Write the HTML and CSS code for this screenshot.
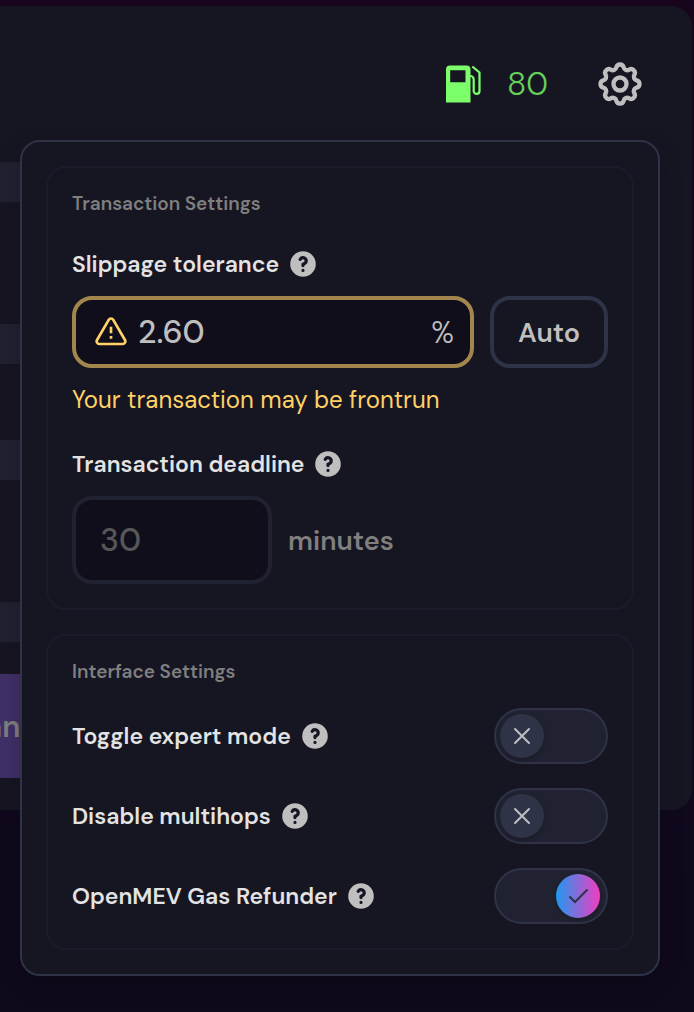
FILE: index.html
```html
<!DOCTYPE html>
<html lang="en">
<head>
  <meta charset="UTF-8">
  <meta name="viewport" content="width=device-width, initial-scale=1.0">
  <title>Swap Settings</title>
  <link rel="stylesheet" href="styles.css">
</head>
<body>
  <!-- Icons used more than once -->
  <svg class="sprite" aria-hidden="true">
    <symbol id="icon-help" viewBox="0 0 20 20">
      <path fill="currentColor" fill-rule="evenodd" clip-rule="evenodd" d="M18 10a8 8 0 11-16 0 8 8 0 0116 0zm-8-3a1 1 0 00-.867.5 1 1 0 11-1.731-1A3 3 0 0113 8a3.001 3.001 0 01-2 2.83V11a1 1 0 11-2 0v-1a1 1 0 011-1 1 1 0 100-2zm0 8a1 1 0 100-2 1 1 0 000 2z"/>
    </symbol>
    <symbol id="icon-x" viewBox="0 0 24 24">
      <path fill="none" stroke="currentColor" stroke-width="2" stroke-linecap="round" d="M5 5l14 14M19 5L5 19"/>
    </symbol>
    <symbol id="icon-check" viewBox="0 0 24 24">
      <path fill="none" stroke="currentColor" stroke-width="2" stroke-linecap="round" stroke-linejoin="miter" d="M4 13l5 5L21 6"/>
    </symbol>
  </svg>

  <main class="swap-card">
    <header class="swap-header">
      <div class="gas">
        <svg class="gas-icon" viewBox="0 0 36 38" aria-hidden="true">
          <path fill="currentColor" fill-rule="evenodd" d="M4 0.500h16.500a4 4 0 014 4V37.500H0V4.500a4 4 0 014-4zM4.200 5.200v12h15.300v-12z"/>
          <path fill="none" stroke="currentColor" stroke-width="2.200" d="M26.300 1.500l7.200 6V26a2.900 2.900 0 01-5.800 0V14.500a3.500 3.500 0 00-3.500-3.500"/>
        </svg>
        <span class="gas-price">80</span>
      </div>
      <button class="settings-button" type="button" aria-label="Settings">
        <svg viewBox="0 0 24 24" fill="none" stroke="currentColor" stroke-width="2" stroke-linecap="round" stroke-linejoin="round">
          <path d="M10.325 4.317c.426-1.756 2.924-1.756 3.350 0a1.724 1.724 0 002.573 1.066c1.543-.94 3.310.826 2.370 2.370a1.724 1.724 0 001.065 2.572c1.756.426 1.756 2.924 0 3.350a1.724 1.724 0 00-1.066 2.573c.94 1.543-.826 3.310-2.370 2.370a1.724 1.724 0 00-2.572 1.065c-.426 1.756-2.924 1.756-3.350 0a1.724 1.724 0 00-2.573-1.066c-1.543.94-3.310-.826-2.370-2.370a1.724 1.724 0 00-1.065-2.572c-1.756-.426-1.756-2.924 0-3.350a1.724 1.724 0 001.066-2.573c-.94-1.543.826-3.310 2.370-2.370.996.608 2.296.070 2.572-1.065z"/>
          <circle cx="12" cy="12" r="3"/>
        </svg>
      </button>
    </header>

    <div class="swap-form">
      <div class="asset">
        <div class="asset-row"></div>
        <div class="asset-row"></div>
      </div>
      <div class="asset">
        <div class="asset-row"></div>
        <div class="asset-row"></div>
      </div>
      <button class="swap-button" type="button">an</button>
    </div>

    <div class="settings-panel">
      <section class="settings-group">
        <h2 class="group-title">Transaction Settings</h2>

        <div class="field">
          <div class="field-label">
            <label for="slippage">Slippage tolerance</label>
            <svg class="help-icon" aria-hidden="true"><use href="#icon-help"/></svg>
          </div>
          <div class="field-row">
            <div class="input-box warning">
              <svg class="warning-icon" viewBox="0 0 24 24" fill="none" stroke="currentColor" stroke-width="2" stroke-linecap="round" stroke-linejoin="round" aria-hidden="true">
                <path d="M10.290 2.860L1.520 18a2 2 0 001.710 3h17.540a2 2 0 001.710-3L13.710 2.860a2 2 0 00-3.420 0z"/>
                <path stroke-linecap="butt" d="M12 8v5M12 15v2"/>
              </svg>
              <input id="slippage" class="text-input" type="text" inputmode="decimal" value="2.60">
              <span class="unit">%</span>
            </div>
            <button class="auto-button" type="button">Auto</button>
          </div>
          <p class="warning-text">Your transaction may be frontrun</p>
        </div>

        <div class="field">
          <div class="field-label">
            <label for="deadline">Transaction deadline</label>
            <svg class="help-icon" aria-hidden="true"><use href="#icon-help"/></svg>
          </div>
          <div class="field-row">
            <div class="input-box deadline">
              <input id="deadline" class="text-input" type="text" inputmode="numeric" placeholder="30">
            </div>
            <span class="minutes">minutes</span>
          </div>
        </div>
      </section>

      <section class="settings-group interface">
        <h2 class="group-title">Interface Settings</h2>

        <div class="toggle-row">
          <div class="field-label">
            <label for="expert">Toggle expert mode</label>
            <svg class="help-icon" aria-hidden="true"><use href="#icon-help"/></svg>
          </div>
          <div class="switch">
            <input id="expert" type="checkbox">
            <span class="knob">
              <svg class="icon-off"><use href="#icon-x"/></svg>
              <svg class="icon-on"><use href="#icon-check"/></svg>
            </span>
          </div>
        </div>

        <div class="toggle-row">
          <div class="field-label">
            <label for="multihops">Disable multihops</label>
            <svg class="help-icon" aria-hidden="true"><use href="#icon-help"/></svg>
          </div>
          <div class="switch">
            <input id="multihops" type="checkbox">
            <span class="knob">
              <svg class="icon-off"><use href="#icon-x"/></svg>
              <svg class="icon-on"><use href="#icon-check"/></svg>
            </span>
          </div>
        </div>

        <div class="toggle-row">
          <div class="field-label">
            <label for="openmev">OpenMEV Gas Refunder</label>
            <svg class="help-icon" aria-hidden="true"><use href="#icon-help"/></svg>
          </div>
          <div class="switch">
            <input id="openmev" type="checkbox" checked>
            <span class="knob">
              <svg class="icon-off"><use href="#icon-x"/></svg>
              <svg class="icon-on"><use href="#icon-check"/></svg>
            </span>
          </div>
        </div>
      </section>
    </div>
  </main>
</body>
</html>
```

FILE: styles.css
```css
/* General Reset */
* {
  box-sizing: border-box;
}

h2, p {
  margin: 0;
}

button, input {
  font-family: inherit;
}

button {
  cursor: pointer;
}

svg {
  display: block;
}

/* Body & Background */
body {
  margin: 0;
  padding: 6px 2px 0 0;
  min-height: 100vh;
  font-family: 'DM Sans', Inter, sans-serif;
  color: #bfbfbf;
  background: linear-gradient(#16051c, #0f091c);
  overflow-x: hidden;
}

.sprite {
  display: none;
}

/* Swap Card */
.swap-card {
  position: relative;
  padding: 52px 0 32px;
  background-color: #161522;
  border-radius: 0 20px 20px 0;
}

.swap-header {
  display: flex;
  justify-content: flex-end;
  align-items: center;
  gap: 46px;
  padding-right: 46px;
  margin-bottom: 52px;
}

.gas {
  display: flex;
  align-items: center;
  gap: 25px;
  color: #7cff6b;
}

.gas-icon {
  width: 36px;
  height: 38px;
}

.gas-price {
  font-size: 32px;
  font-weight: 300;
  line-height: 40px;
  opacity: 0.8;
}

.settings-button {
  padding: 0;
  border: none;
  background: none;
  color: #bfbfbf;
}

.settings-button svg {
  width: 52px;
  height: 52px;
}

/* The form runs off the left edge of the window */
.swap-form {
  margin-left: -15px;
}

.asset {
  display: grid;
  gap: 122px;
  margin-bottom: 76px;
}

.asset + .asset {
  margin-bottom: 32px;
}

.asset-row {
  height: 40px;
  background-color: #202231;
}

.asset-row, .swap-button {
  width: 50%;
}

.swap-button {
  display: block;
  height: 104px;
  padding: 0;
  border: none;
  background-color: #3f3068;
  color: #7f7f7f;
  font-size: 30px;
  font-weight: 600;
  text-align: left;
}

/* Settings Panel */
.settings-panel {
  position: absolute;
  top: 134px;
  left: 20px;
  right: 32px;
  display: grid;
  gap: 24px;
  padding: 24px;
  background-color: #161522;
  border: 2px solid #2e3348;
  border-radius: 20px;
  box-shadow: 0 8px 24px rgba(0, 0, 0, 0.2);
}

.settings-group {
  display: grid;
  gap: 32px;
  padding: 24px;
  border: 2px solid #1b1b29;
  border-radius: 20px;
}

.settings-group.interface {
  gap: 24px;
}

.group-title {
  color: #7f7f7f;
  font-size: 19px;
  font-weight: 600;
  line-height: 24px;
}

.field {
  display: grid;
  gap: 16px;
}

.field-label {
  display: flex;
  align-items: center;
  gap: 8px;
  color: #e3e3e3;
  font-size: 23px;
  font-weight: 600;
  line-height: 32px;
}

.help-icon {
  width: 32px;
  height: 32px;
  color: #bfbfbf;
}

.field-row {
  display: flex;
  align-items: center;
  gap: 16px;
}

/* Inputs */
.input-box {
  display: flex;
  align-items: center;
  gap: 11px;
  flex: 1;
  min-width: 0;
  height: 72px;
  padding: 0 16px 0 19px;
  background-color: #110e1b;
  border: 4px solid #202231;
  border-radius: 20px;
}

.input-box.warning {
  border-color: #a3864d;
}

.input-box.deadline {
  flex: 0 0 200px;
  height: 88px;
  padding: 0 24px;
}

.text-input {
  flex: 1;
  min-width: 0;
  width: 100%;
  padding: 0;
  border: none;
  outline: none;
  background: none;
  color: #bfbfbf;
  font-size: 32px;
  font-weight: 500;
}

.text-input::placeholder {
  color: #575757;
  opacity: 1;
}

.warning-icon {
  flex: none;
  width: 32px;
  height: 32px;
  color: #ffd166;
}

.unit {
  font-size: 30px;
  font-weight: 300;
}

.auto-button {
  width: 118px;
  height: 72px;
  padding: 0;
  background: none;
  border: 4px solid #2e3348;
  border-radius: 20px;
  color: #bfbfbf;
  font-size: 27px;
  font-weight: 600;
}

.warning-text {
  color: #ffd166;
  font-size: 24px;
  line-height: 32px;
}

.minutes {
  color: #7f7f7f;
  font-size: 27px;
  font-weight: 600;
}

/* Toggles */
.toggle-row {
  display: flex;
  justify-content: space-between;
  align-items: center;
}

.switch {
  display: grid;
  align-items: center;
}

.switch input, .knob {
  grid-area: 1 / 1;
}

.switch input {
  appearance: none;
  width: 114px;
  height: 56px;
  margin: 0;
  background-color: #202231;
  border: 2px solid #2e3348;
  border-radius: 28px;
  cursor: pointer;
}

.knob {
  display: grid;
  place-items: center;
  width: 44px;
  height: 44px;
  margin-left: 6px;
  background-color: #2e3348;
  border-radius: 50%;
  box-shadow: 0 2px 4px rgba(0, 0, 0, 0.2);
  color: #bfbfbf;
  pointer-events: none;
}

.knob svg {
  width: 24px;
  height: 24px;
}

.knob .icon-on {
  display: none;
}

.switch input:checked + .knob {
  margin-left: 62px;
  background: linear-gradient(to right, #2098f0, #f33cc0);
  color: #2e3348;
}

.switch input:checked + .knob .icon-on {
  display: block;
}

.switch input:checked + .knob .icon-off {
  display: none;
}
```
